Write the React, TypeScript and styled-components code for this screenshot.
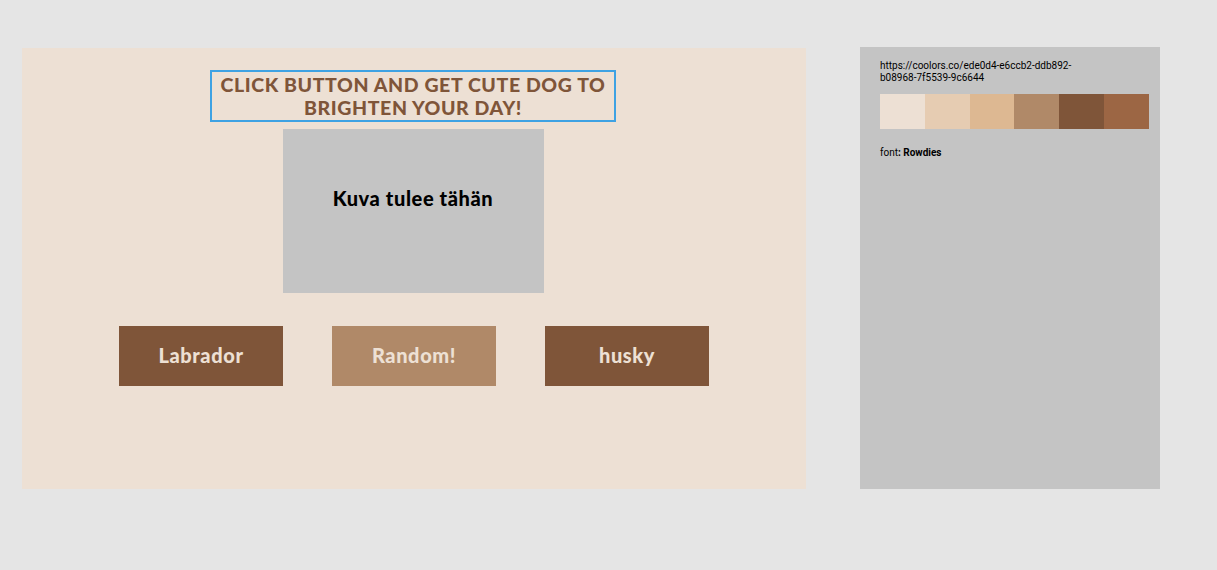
import React from "react";
import styled, { createGlobalStyle } from "styled-components";

const Global = createGlobalStyle`
  html, body { margin: 0; padding: 0; background: #e5e5e5; }
  body { font-family: "Lato", "Noto Sans", sans-serif; }
`;

const Page = styled.div`
  width: 1217px;
  height: 570px;
  display: flex;
  align-items: flex-start;
  padding: 47px 0 0 22px;
  box-sizing: border-box;
  gap: 54px;
`;

const Frame = styled.main`
  width: 784px;
  height: 441px;
  margin-top: 1px;
  background: #ede0d4;
  display: flex;
  flex-direction: column;
  align-items: center;
  padding: 22px 2px 0 0;
  box-sizing: border-box;
`;

const Title = styled.h1`
  margin: 0;
  width: 406px;
  height: 52px;
  box-sizing: border-box;
  border: 2px solid #3ea2e3;
  color: #7f5539;
  font-family: "Lato", sans-serif;
  font-weight: 900;
  font-size: 19.5px;
  line-height: 23px;
  text-align: center;
  text-transform: uppercase;
  padding-top: 1px;
  letter-spacing: 0.6px;
  white-space: nowrap;
`;

const ImageBox = styled.div`
  margin-top: 7px;
  width: 261px;
  height: 164px;
  background: #c4c4c4;
  display: flex;
  align-items: center;
  justify-content: center;
  font-family: "Lato", sans-serif;
  font-weight: 900;
  font-size: 20px;
  letter-spacing: 0.6px;
  color: #000;
  padding-bottom: 26px;
  box-sizing: border-box;
`;

const ButtonRow = styled.div`
  margin: 33px 0 0 2px;
  display: flex;
  gap: 49px;
`;

const Button = styled.button<{ $light?: boolean }>`
  width: 164px;
  height: 60px;
  border: none;
  margin: 0;
  background: ${(p) => (p.$light ? "#b08968" : "#7f5539")};
  color: #ede0d4;
  font-family: "Lato", sans-serif;
  font-weight: 900;
  font-size: 20px;
  letter-spacing: 0.6px;
  cursor: pointer;
  padding: 0 0 2px;
`;

const Side = styled.aside`
  width: 300px;
  height: 442px;
  background: #c4c4c4;
  padding: 13px 11px 0 20px;
  box-sizing: border-box;
  font-family: "Roboto", sans-serif;
  font-size: 10px;
  color: #000;
`;

const Url = styled.p`
  margin: 0;
  width: 200px;
  line-height: 11.5px;
  word-break: break-all;
`;

const Palette = styled.div`
  margin-top: 11px;
  display: flex;
  width: 269px;
  height: 35px;
`;

const Swatch = styled.div<{ $c: string }>`
  flex: 1;
  background: ${(p) => p.$c};
`;

const FontNote = styled.p`
  margin: 18px 0 0;
  line-height: 12px;
  b { font-weight: 700; }
`;

const colors = ["#ede0d4", "#e6ccb2", "#ddb892", "#b08968", "#7f5539", "#9c6644"];

export default function App() {
  return (
    <>
      <Global />
      <Page>
        <Frame>
          <Title>
            Click button and get cute dog to
            <br />
            brighten your day!
          </Title>
          <ImageBox>Kuva tulee tähän</ImageBox>
          <ButtonRow>
            <Button>Labrador</Button>
            <Button $light>Random!</Button>
            <Button>husky</Button>
          </ButtonRow>
        </Frame>
        <Side>
          <Url>
            https://coolors.co/ede0d4-e6ccb2-ddb892-
            <br />
            b08968-7f5539-9c6644
          </Url>
          <Palette>
            {colors.map((c) => (
              <Swatch key={c} $c={c} />
            ))}
          </Palette>
          <FontNote>
            font<b>: Rowdies</b>
          </FontNote>
        </Side>
      </Page>
    </>
  );
}
